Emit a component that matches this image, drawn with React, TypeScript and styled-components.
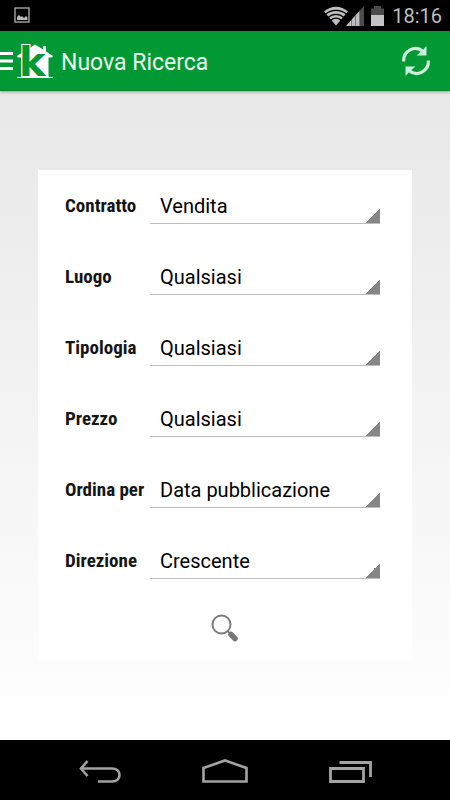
import React from 'react';
import styled, { createGlobalStyle } from 'styled-components';

const GlobalStyle = createGlobalStyle`
  *, *::before, *::after { box-sizing: border-box; }
  body {
    margin: 0;
    background: #fff;
    color: #000;
    font-family: Roboto, "Liberation Sans", sans-serif;
  }
  button, select { font: inherit; color: inherit; margin: 0; border: 0; padding: 0; background: none; }
  svg { display: block; overflow: visible; }
`;

const Screen = styled.div`
  min-height: 100vh;
  display: flex;
  flex-direction: column;
`;

const StatusBar = styled.div`
  height: 31px;
  padding: 0 8px 0 14px;
  display: flex;
  align-items: center;
  justify-content: space-between;
  background: #000;
  color: #bebebe;
`;

const StatusIcons = styled.div`
  display: flex;
  align-items: center;
`;

const Clock = styled.time`
  margin-left: 8px;
  font-size: 20px;
  line-height: 24px;
`;

const ActionBar = styled.header`
  height: 60px;
  padding-right: 19px;
  display: flex;
  align-items: center;
  background: #029935;
  border-bottom: 1px solid #02852e;
  box-shadow: 0 1px 3px rgba(0, 0, 0, 0.35);
  z-index: 1;
`;

const MenuButton = styled.button`
  display: flex;
  align-items: center;
`;

const Title = styled.h1`
  flex: 1;
  margin: 0 0 0 7px;
  padding-top: 4px;
  font-size: 23px;
  font-weight: 400;
  line-height: 28px;
  color: #e9f7ed;
`;

const IconButton = styled.button`
  display: flex;
`;

const Content = styled.main`
  flex: 1;
  padding: 79px 38px 80px;
  background: linear-gradient(#e8e8e8, #fff);
`;

const SearchForm = styled.form`
  padding: 18px 32px 16px 27px;
  display: flex;
  flex-direction: column;
  gap: 35px;
  background: #fff;
`;

const Field = styled.div`
  display: grid;
  grid-template-columns: 85px 1fr;
  align-items: center;
`;

const Label = styled.label`
  font-family: "Roboto Condensed", "Liberation Sans Narrow", Roboto, sans-serif;
  font-size: 19px;
  font-weight: 700;
  line-height: 24px;
  white-space: nowrap;
  color: #151515;
`;

const Spinner = styled.select`
  appearance: none;
  width: 100%;
  height: 36px;
  padding-left: 10px;
  border-bottom: 1px solid #bdbdbd;
  border-radius: 0;
  background: linear-gradient(135deg, transparent 50%, #868686 50%) right bottom / 15px 15px no-repeat;
  font-size: 20px;
  line-height: 24px;
`;

const SubmitButton = styled.button`
  display: flex;
  align-self: center;
  margin-left: 5px;
`;

const NavBar = styled.nav`
  height: 60px;
  padding: 4px 37px 0;
  display: grid;
  grid-template-columns: repeat(3, 1fr);
  background: #000;
`;

const NavButton = styled.button`
  display: flex;
  align-items: center;
  justify-content: center;
`;

const PictureIcon = () => (
  <svg width="17" height="17" viewBox="0 0 17 17" aria-hidden="true">
    <rect x="1" y="1" width="14" height="14" fill="none" stroke="#a5a5a5" strokeWidth="1.4" />
    <path d="M3 13V10L5 8L7 10L8 9L10 11L12 9L13.500 10.500V13Z" fill="#b9b9b9" />
  </svg>
);

const NetworkIcon = () => (
  <svg width="40" height="20" viewBox="0 0 40 20" aria-hidden="true">
    <path d="M12 19.500L0 5.500C7 -0.800 17 -0.800 24 5.500Z" fill="#bebebe" />
    <g fill="none" stroke="#000" strokeWidth="1.300">
      <path d="M1.500 8.200C7.500 3 16.500 3 22.500 8.200" />
      <path d="M4 11.500C8.800 7.200 15.200 7.200 20 11.500" />
      <path d="M6.500 14.500C9.800 11.500 14.200 11.500 17.500 14.500" />
    </g>
    <path d="M22 20L40 0V20Z" fill="#4b4b4b" />
    <path d="M22 20L36 4.500V20Z" fill="#bebebe" />
    <path d="M27.500 14V20M31.500 10V20M35.500 5V20" stroke="#777" />
  </svg>
);

const BatteryIcon = () => (
  <svg width="20" height="20" viewBox="0 0 20 20" aria-hidden="true">
    <path d="M10 2.500V0H17V2.500H20V9H7V2.500Z" fill="#4b4b4b" />
    <path d="M7 9H20V20H7Z" fill="#c4c4c4" />
  </svg>
);

const DrawerIcon = () => (
  <svg width="17" height="20" viewBox="0 0 17 20" aria-hidden="true">
    <path d="M0 2.500H13M0 10H13M0 17.500H13" stroke="#fff" strokeWidth="3" />
  </svg>
);

const HouseLogo = () => (
  <svg width="37" height="36" viewBox="0 0 37 36" aria-hidden="true">
    <path d="M0 13L18 1.500L26 6.500V3H29V8.500L36 13L35 14.500H31.500V34H36V35H0V34H4V14.500H1Z" fill="#fff" />
    <text
      x="2"
      y="33"
      fontFamily="DejaVu Sans, sans-serif"
      fontWeight="700"
      fontSize="40"
      fill="#029935"
      stroke="#fff"
      strokeWidth="2"
      paintOrder="stroke"
    >
      k
    </text>
  </svg>
);

const RefreshIcon = () => (
  <svg width="30" height="32" viewBox="0 0 30 32" aria-hidden="true">
    <g fill="none" stroke="#cdeed8" strokeWidth="3.200">
      <path d="M2.600 16.500C2 6 14 -0.500 22 6.500" />
      <path d="M27.400 15.500C28 26 16 32.500 8 25.500" />
    </g>
    <path d="M25.500 1V10.500H15.500L19 7.500L22.500 4.200Z M4.500 31V21.500H14.500L11 24.500L7.500 27.800Z" fill="#cdeed8" />
  </svg>
);

const SearchIcon = () => (
  <svg width="32" height="30" viewBox="0 1 32 30" aria-hidden="true">
    <circle cx="12.500" cy="11.500" r="9" fill="none" stroke="#7b7b7b" strokeWidth="2" />
    <path d="M18.500 18L21 20.500" stroke="#7b7b7b" strokeWidth="2" />
    <path d="M22 21.500L26 25.500" stroke="#767676" strokeWidth="5.500" strokeLinecap="round" />
  </svg>
);

const BackIcon = () => (
  <svg width="42" height="24" viewBox="0 0 42 24" fill="none" stroke="#a3a3a3" aria-hidden="true">
    <path d="M2 8.500H33C43 8.500 43 21.500 33 21.500H19" strokeWidth="2.600" />
    <path d="M8.500 1L2 8.500L8.500 16" strokeWidth="2.600" />
  </svg>
);

const HomeIcon = () => (
  <svg width="46" height="28" viewBox="0 0 46 28" fill="none" stroke="#a3a3a3" aria-hidden="true">
    <path d="M1.500 10L23 2.500L44.500 10V23.500H1.500Z" strokeWidth="2.600" />
  </svg>
);

const RecentIcon = () => (
  <svg width="44" height="24" viewBox="-1 0 44 24" fill="none" stroke="#a3a3a3" aria-hidden="true">
    <path d="M1.500 8.500H34.500V21.500H1.500Z" strokeWidth="2.800" />
    <path d="M10.500 2.500H41.500V17" strokeWidth="2.800" />
  </svg>
);

const fields = [
  { id: 'contratto', label: 'Contratto', value: 'Vendita' },
  { id: 'luogo', label: 'Luogo', value: 'Qualsiasi' },
  { id: 'tipologia', label: 'Tipologia', value: 'Qualsiasi' },
  { id: 'prezzo', label: 'Prezzo', value: 'Qualsiasi' },
  { id: 'ordina', label: 'Ordina per', value: 'Data pubblicazione' },
  { id: 'direzione', label: 'Direzione', value: 'Crescente' },
];

export default function App() {
  return (
    <>
      <GlobalStyle />
      <Screen>
        <StatusBar>
          <PictureIcon />
          <StatusIcons>
            <NetworkIcon />
            <BatteryIcon />
            <Clock>18:16</Clock>
          </StatusIcons>
        </StatusBar>
        <ActionBar>
          <MenuButton type="button" aria-label="Menu">
            <DrawerIcon />
            <HouseLogo />
          </MenuButton>
          <Title>Nuova Ricerca</Title>
          <IconButton type="button" aria-label="Aggiorna">
            <RefreshIcon />
          </IconButton>
        </ActionBar>
        <Content>
          <SearchForm onSubmit={(event) => event.preventDefault()}>
            {fields.map(({ id, label, value }) => (
              <Field key={id}>
                <Label htmlFor={id}>{label}</Label>
                <Spinner id={id} name={id} defaultValue={value}>
                  <option>{value}</option>
                </Spinner>
              </Field>
            ))}
            <SubmitButton type="submit" aria-label="Cerca">
              <SearchIcon />
            </SubmitButton>
          </SearchForm>
        </Content>
        <NavBar>
          <NavButton type="button" aria-label="Indietro">
            <BackIcon />
          </NavButton>
          <NavButton type="button" aria-label="Home">
            <HomeIcon />
          </NavButton>
          <NavButton type="button" aria-label="App recenti">
            <RecentIcon />
          </NavButton>
        </NavBar>
      </Screen>
    </>
  );
}
